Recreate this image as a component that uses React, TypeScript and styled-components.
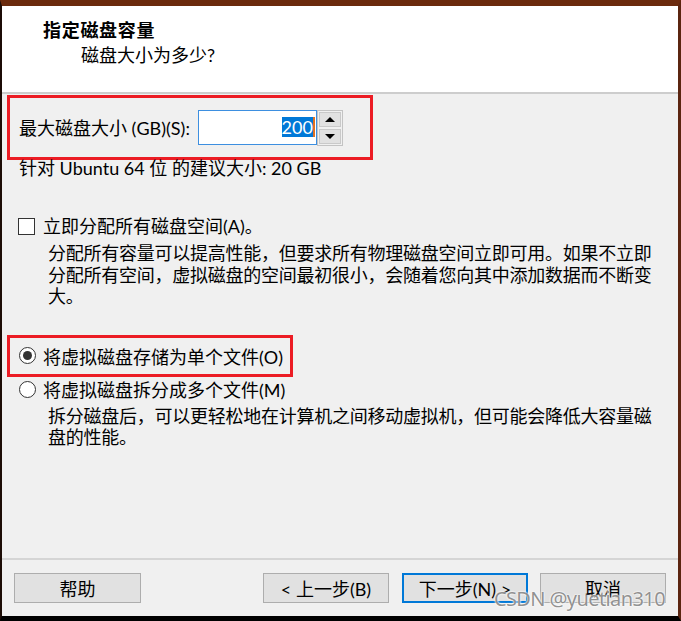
import React from 'react'
import styled, { createGlobalStyle } from 'styled-components'

const GlobalStyle = createGlobalStyle`
  html, body {
    margin: 0;
    padding: 0;
    background: #000;
  }
  * {
    box-sizing: border-box;
  }
`

const Window = styled.div`
  position: relative;
  width: 681px;
  height: 621px;
  display: flex;
  flex-direction: column;
  border-top: 6px solid #6b2a0d;
  border-left: 2px solid #1c0c06;
  border-right: 3px solid #5b2510;
  border-bottom: 5px solid #000;
  background: #f0f0f0;
  font-family: Lato, 'Noto Sans CJK SC', sans-serif;
  font-size: 18px;
  color: #000;
  overflow: hidden;
`
const Header = styled.header`
  height: 88px;
  background: #fff;
  border-bottom: 2px solid #cdcdcd;
  padding: 13px 0 0 41px;
`
const Title = styled.div`
  font-weight: bold;
  line-height: 22px;
  letter-spacing: 0.7px;
`
const Subtitle = styled.div`
  margin: 3px 0 0 38px;
  line-height: 22px;
`
const Body = styled.main`
  flex: 1;
  display: flex;
  flex-direction: column;
  align-items: flex-start;
`
const Highlight = styled.div<{ $width: number; $height: number; $top: number }>`
  width: ${p => p.$width}px;
  height: ${p => p.$height}px;
  margin: ${p => p.$top}px 0 0 5px;
  padding-left: 9px;
  border: 3px solid #ec1c24;
  display: flex;
  align-items: center;
  white-space: nowrap;
`
const SizeLabel = styled.label`
  line-height: 22px;
`
const Spinner = styled.div`
  display: flex;
  margin-left: 8px;
`
const NumberField = styled.div`
  width: 119px;
  height: 35px;
  background: #fff;
  border: 1px solid #3d8fe0;
  display: flex;
  align-items: center;
  justify-content: flex-end;
  padding-right: 1px;
`
const Selected = styled.span`
  background: #0078d7;
  color: #fff;
  line-height: 20px;
  border-right: 2px solid #e07020;
`
const SpinButtons = styled.div`
  width: 26px;
  height: 36px;
  display: flex;
  flex-direction: column;
  border: 1px solid #c3c3c3;
  background: #f0f0f0;
`
const SpinButton = styled.div<{ $down?: boolean }>`
  flex: 1;
  margin: 1px;
  background: #e1e1e1;
  border: 1px solid #c9c9c9;
  display: flex;
  align-items: center;
  justify-content: center;
  &::after {
    content: '';
    border-left: 5px solid transparent;
    border-right: 5px solid transparent;
    ${p => (p.$down ? 'border-top: 5px solid #000;' : 'border-bottom: 5px solid #000;')}
  }
`
const Hint = styled.div`
  margin: -1px 0 0 17px;
  line-height: 18px;
  white-space: nowrap;
`
const OptionRow = styled.div<{ $top: number; $left: number }>`
  display: flex;
  align-items: center;
  margin: ${p => p.$top}px 0 0 ${p => p.$left}px;
  line-height: 22px;
  white-space: nowrap;
`
const CheckBox = styled.span`
  width: 17px;
  height: 17px;
  border: 1px solid #333;
  background: #fff;
  margin-right: 8px;
`
const Radio = styled.span<{ $checked?: boolean }>`
  width: 17px;
  height: 17px;
  border-radius: 50%;
  border: 1px solid #333;
  background: #fff;
  margin-right: 7px;
  display: flex;
  align-items: center;
  justify-content: center;
  &::after {
    content: '';
    width: 9px;
    height: 9px;
    border-radius: 50%;
    background: ${p => (p.$checked ? '#333' : 'transparent')};
  }
`
const Description = styled.p<{ $top: number }>`
  margin: ${p => p.$top}px 0 0 46px;
  line-height: 21.5px;
  letter-spacing: -0.25px;
  white-space: nowrap;
`
const Footer = styled.footer`
  display: flex;
  border-top: 2px solid #d5d5d5;
  padding: 13px 12px 13px 12px;
`
const Button = styled.button<{ $primary?: boolean; $width?: number }>`
  width: ${p => p.$width ?? 126}px;
  height: 30px;
  margin-left: ${p => (p.$primary ? 13 : 0)}px;
  margin-right: ${p => (p.$primary ? 12 : 0)}px;
  padding: 0;
  background: #e1e1e1;
  border: ${p => (p.$primary ? '2px solid #0078d7' : '1px solid #adadad')};
  font-family: inherit;
  font-size: 18px;
  color: #000;
`
const Spacer = styled.div`
  flex: 1;
`
const Watermark = styled.div`
  position: absolute;
  right: 13px;
  bottom: 4px;
  font-family: 'Noto Sans', sans-serif;
  font-size: 20px;
  letter-spacing: -0.6px;
  color: rgba(110, 110, 110, 0.75);
  text-shadow: 0 0 2px #fff, 0 0 2px #fff;
  pointer-events: none;
`

const App: React.FC = () => {
  return (
    <>
      <GlobalStyle />
      <Window>
        <Header>
          <Title>指定磁盘容量</Title>
          <Subtitle>磁盘大小为多少?</Subtitle>
        </Header>

        <Body>
          <Highlight $width={366} $height={65} $top={1}>
            <SizeLabel>最大磁盘大小 (GB)(S):</SizeLabel>
            <Spinner>
              <NumberField>
                <Selected>200</Selected>
              </NumberField>
              <SpinButtons>
                <SpinButton />
                <SpinButton $down />
              </SpinButtons>
            </Spinner>
          </Highlight>
          <Hint>针对 Ubuntu 64 位 的建议大小: 20 GB</Hint>

          <OptionRow $top={38} $left={16}>
            <CheckBox />
            立即分配所有磁盘空间(A)。
          </OptionRow>
          <Description $top={6}>
            分配所有容量可以提高性能，但要求所有物理磁盘空间立即可用。如果不立即
            <br />
            分配所有空间，虚拟磁盘的空间最初很小，会随着您向其中添加数据而不断变
            <br />
            大。
          </Description>

          <Highlight $width={286} $height={42} $top={27}>
            <Radio $checked />
            <span>将虚拟磁盘存储为单个文件(O)</span>
          </Highlight>
          <OptionRow $top={2} $left={17}>
            <Radio />
            将虚拟磁盘拆分成多个文件(M)
          </OptionRow>
          <Description $top={5}>
            拆分磁盘后，可以更轻松地在计算机之间移动虚拟机，但可能会降低大容量磁
            <br />
            盘的性能。
          </Description>
        </Body>

        <Footer>
          <Button $width={127}>帮助</Button>
          <Spacer />
          <Button>&lt; 上一步(B)</Button>
          <Button $primary>下一步(N) &gt;</Button>
          <Button>取消</Button>
        </Footer>

        <Watermark>CSDN @yuetian310</Watermark>
      </Window>
    </>
  )
}

export default App
